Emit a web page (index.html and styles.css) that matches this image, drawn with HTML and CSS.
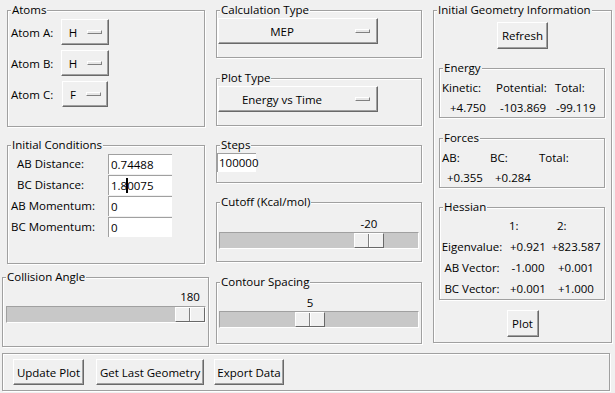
FILE: index.html
```html
<!DOCTYPE html>
<html lang="en">
<head>
    <meta charset="UTF-8">
    <title>Reaction Dynamics</title>
    <link rel="stylesheet" href="styles.css">
</head>
<body>
    <div class="window">
        <div class="col">
            <div class="group atoms">
                <div class="title">Atoms</div>
                <div class="atom-grid">
                    <span class="lbl">Atom A:</span>
                    <div class="menubutton"><span>H</span><i class="indicator"></i></div>
                    <span class="lbl">Atom B:</span>
                    <div class="menubutton"><span>H</span><i class="indicator"></i></div>
                    <span class="lbl">Atom C:</span>
                    <div class="menubutton"><span>F</span><i class="indicator"></i></div>
                </div>
            </div>

            <div class="group init">
                <div class="title">Initial Conditions</div>
                <div class="init-grid">
                    <span class="indent">AB Distance:</span>
                    <div class="entry">0.74488</div>
                    <span class="indent">BC Distance:</span>
                    <div class="entry">1.8<i class="caret"></i>0075</div>
                    <span>AB Momentum:</span>
                    <div class="entry">0</div>
                    <span>BC Momentum:</span>
                    <div class="entry">0</div>
                </div>
            </div>

            <div class="group collision">
                <div class="title">Collision Angle</div>
                <div class="scale">
                    <div class="scale-value" style="margin-left: 169px">180</div>
                    <div class="trough"><div class="slider" style="margin-left: 168px"></div></div>
                </div>
            </div>
        </div>

        <div class="col">
            <div class="group calc">
                <div class="title">Calculation Type</div>
                <div class="menubutton wide"><span>MEP</span><i class="indicator"></i></div>
            </div>

            <div class="group plot-type">
                <div class="title">Plot Type</div>
                <div class="menubutton wide"><span>Energy vs Time</span><i class="indicator"></i></div>
            </div>

            <div class="group steps">
                <div class="title">Steps</div>
                <div class="entry small">100000</div>
            </div>

            <div class="group cutoff">
                <div class="title">Cutoff (Kcal/mol)</div>
                <div class="scale">
                    <div class="scale-value" style="margin-left: 135px">-20</div>
                    <div class="trough"><div class="slider" style="margin-left: 134px"></div></div>
                </div>
            </div>

            <div class="group contour">
                <div class="title">Contour Spacing</div>
                <div class="scale">
                    <div class="scale-value" style="margin-left: 76px">5</div>
                    <div class="trough"><div class="slider" style="margin-left: 75px"></div></div>
                </div>
            </div>
        </div>

        <div class="col">
            <div class="group geometry">
                <div class="title">Initial Geometry Information</div>
                <div class="button refresh">Refresh</div>

                <div class="group sub energy">
                    <div class="title">Energy</div>
                    <div class="info-grid energy-grid">
                        <span>Kinetic:</span><span>Potential:</span><span>Total:</span>
                        <span>+4.750</span><span>-103.869</span><span>-99.119</span>
                    </div>
                </div>

                <div class="group sub forces">
                    <div class="title">Forces</div>
                    <div class="info-grid forces-grid">
                        <span>AB:</span><span>BC:</span><span>Total:</span>
                        <span>+0.355</span><span>+0.284</span><span></span>
                    </div>
                </div>

                <div class="group sub hessian">
                    <div class="title">Hessian</div>
                    <div class="hessian-grid">
                        <span></span><span class="head">1:</span><span class="head">2:</span>
                        <span>Eigenvalue:</span><span>+0.921</span><span>+823.587</span>
                        <span>AB Vector:</span><span>-1.000</span><span>+0.001</span>
                        <span>BC Vector:</span><span>+0.001</span><span>+1.000</span>
                    </div>
                </div>

                <div class="button plot">Plot</div>
            </div>
        </div>
    </div>

    <div class="group bottom-bar">
        <div class="button update">Update Plot</div>
        <div class="button last">Get Last Geometry</div>
        <div class="button export">Export Data</div>
    </div>
</body>
</html>
```

FILE: styles.css
```css
body {
    margin: 0;
    width: 615px;
    height: 393px;
    overflow: hidden;
    background-color: #f0f0f0;
    color: #000;
    font-family: "Open Sans", "Liberation Sans", sans-serif;
    font-size: 11.5px;
}
.window {
    display: grid;
    grid-template-columns: 210px 216px 1fr;
}
.col {
    display: flex;
    flex-direction: column;
    align-items: flex-start;
}

/* labelframe with groove border */
.group {
    box-sizing: border-box;
    border: 1px solid #a0a0a0;
    box-shadow: 1px 1px 0 #fff, inset 1px 1px 0 #fff;
}
.title {
    align-self: flex-start;
    width: fit-content;
    margin: -9px 0 1px 3px;
    padding: 0 1px;
    line-height: 15px;
    background-color: #f0f0f0;
}

/* raised widgets */
.menubutton,
.button {
    box-sizing: border-box;
    display: flex;
    align-items: center;
    background-color: #f0f0f0;
    border: 1px solid;
    border-color: #fff #696969 #696969 #fff;
    box-shadow: inset -1px -1px 0 #a0a0a0;
}
.menubutton {
    height: 26px;
    padding: 0 6px 0 7px;
    gap: 10px;
}
.indicator {
    box-sizing: border-box;
    width: 15px;
    height: 4px;
    border: 1px solid;
    border-color: #fff #808080 #808080 #fff;
    background-color: #e6e6e6;
}
.menubutton.wide {
    width: 160px;
    margin: 1px 0 0 1px;
    padding: 0 7px 0 0;
}
.menubutton.wide span {
    flex: 1;
    text-align: center;
}
.button {
    height: 27px;
    padding: 0 4px;
    justify-content: center;
    white-space: nowrap;
}

.entry {
    box-sizing: border-box;
    height: 20px;
    padding-left: 2px;
    line-height: 19px;
    background-color: #fff;
    border-top: 1px solid #a0a0a0;
    border-left: 1px solid #a0a0a0;
    white-space: nowrap;
}
.caret {
    display: inline-block;
    width: 2px;
    height: 15px;
    margin: 0 -1px;
    vertical-align: -3px;
    background-color: #000;
}

/* left column */
.atoms {
    margin: 10px 0 0 7px;
    width: 198px;
    height: 117px;
}
.atom-grid {
    display: grid;
    grid-template-columns: 45px 50px;
    column-gap: 4px;
    row-gap: 5px;
    margin: 2px 0 0 3px;
    align-items: center;
    justify-items: center;
}
.atom-grid .lbl {
    justify-self: start;
}
.init {
    margin: 18px 0 0 7px;
    width: 198px;
    height: 119px;
}
.init-grid {
    display: grid;
    grid-template-columns: 97px 64px;
    grid-auto-rows: 21px;
    align-items: center;
    margin: 1px 0 0 3px;
}
.indent {
    padding-left: 6px;
}
.collision {
    margin: 13px 0 0 2px;
    width: 207px;
    height: 70px;
}

/* scales */
.scale {
    width: 200px;
    margin-left: 2px;
}
.collision .scale {
    margin: 5px 0 0 3px;
}
.cutoff .scale {
    margin-top: 7px;
}
.contour .scale {
    margin-top: 6px;
}
.scale-value {
    width: 30px;
    line-height: 15px;
    text-align: center;
}
.trough {
    box-sizing: border-box;
    width: 200px;
    height: 17px;
    margin-top: 1px;
    border: 1px solid;
    border-color: #a0a0a0 #fff #fff #a0a0a0;
    background-color: #c8c8c8;
}
.collision .trough {
    margin-top: 2px;
}
.slider {
    box-sizing: border-box;
    display: flex;
    justify-content: center;
    width: 30px;
    height: 15px;
    background-color: #f0f0f0;
    border: 1px solid;
    border-color: #fff #696969 #696969 #fff;
}
.slider::after {
    content: "";
    width: 1px;
    margin-right: 1px;
    background-color: #808080;
    box-shadow: 1px 0 0 #fff;
}

/* middle column */
.calc {
    margin: 10px 0 0 6px;
    width: 206px;
    height: 48px;
}
.plot-type,
.steps,
.cutoff,
.contour {
    margin-left: 6px;
    width: 206px;
}
.plot-type {
    margin-top: 20px;
    height: 48px;
}
.steps {
    margin-top: 19px;
    height: 38px;
}
.entry.small {
    width: 39px;
    height: 19px;
    margin-top: 1px;
    padding-left: 1px;
    line-height: 17px;
}
.cutoff {
    margin-top: 19px;
    height: 60px;
}
.contour {
    margin-top: 20px;
    height: 62px;
}

/* right column */
.geometry {
    display: flex;
    flex-direction: column;
    align-items: center;
    margin: 10px 0 0 7px;
    width: 179px;
    height: 333px;
}
.refresh {
    width: 51px;
    margin-top: 4px;
}
.sub {
    align-self: flex-start;
    margin-left: 5px;
    width: 166px;
}
.energy {
    margin-top: 19px;
    height: 50px;
}
.forces {
    margin-top: 20px;
    height: 50px;
}
.hessian {
    margin-top: 19px;
    height: 93px;
}
.plot {
    width: 32px;
    margin-top: 10px;
}
.info-grid {
    display: grid;
    grid-auto-rows: 20px;
    align-items: center;
    margin: 2px 0 0 2px;
    white-space: nowrap;
}
.energy-grid {
    grid-template-columns: 54px 59px 1fr;
}
.energy-grid span:nth-child(4) { padding-left: 8px; }
.energy-grid span:nth-child(5) { padding-left: 4px; }
.energy-grid span:nth-child(6) { padding-left: 1px; }
.forces-grid {
    grid-template-columns: 48px 49px 1fr;
}
.forces-grid span:nth-child(4),
.forces-grid span:nth-child(5) {
    padding-left: 5px;
}
.hessian-grid {
    display: grid;
    grid-template-columns: 64px 48px 48px;
    grid-auto-rows: 21px;
    align-items: center;
    justify-items: center;
    margin: 1px 0 0 0;
    white-space: nowrap;
}
.hessian-grid .head {
    justify-self: start;
    padding-left: 5px;
}

/* bottom bar */
.bottom-bar {
    display: flex;
    align-items: flex-start;
    margin: 6px 0 0 2px;
    padding: 5px 0 0 10px;
    width: 608px;
    height: 38px;
}
.bottom-bar .button {
    height: 26px;
}
.update {
    width: 71px;
    margin-right: 12px;
}
.last {
    width: 108px;
    margin-right: 10px;
}
.export {
    width: 70px;
}
```
